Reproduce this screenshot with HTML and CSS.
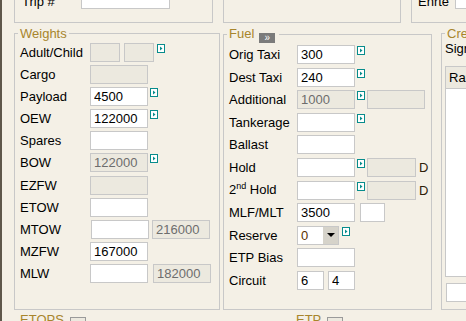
FILE: index.html
```html
<!DOCTYPE html>
<html>
<head>
<meta charset="utf-8">
<link rel="stylesheet" href="styles.css">
</head>
<body>
<div class="page">
  <div class="toprow">
    <div class="topbox tb1"><span class="tlbl">Trip #</span><input class="inp trip" type="text"></div>
    <div class="topbox tb2"></div>
    <div class="topbox tb3"><span class="tlbl2">Enrte</span><input class="inp enrte" type="text"></div>
  </div>

  <div class="mainrow">
    <fieldset class="fs weights">
      <legend>Weights</legend>
      <div class="rows">
        <div class="row"><span class="lbl">Adult/Child</span><input class="inp dis w30" disabled><input class="inp dis w30 ml4" disabled><svg class="ico ml3" width="8" height="9" viewBox="0 0 8 9"><rect x="0.5" y="0.5" width="7" height="8" fill="#fff" stroke="#078c8c"/><path d="M3 2.5L5.5 4.5L3 6.5Z" fill="#078c8c"/></svg></div>
        <div class="row"><span class="lbl">Cargo</span><input class="inp dis w58" disabled></div>
        <div class="row"><span class="lbl">Payload</span><input class="inp w58" value="4500"><svg class="ico" width="8" height="9" viewBox="0 0 8 9"><rect x="0.5" y="0.5" width="7" height="8" fill="#fff" stroke="#078c8c"/><path d="M3 2.5L5.5 4.5L3 6.5Z" fill="#078c8c"/></svg></div>
        <div class="row"><span class="lbl">OEW</span><input class="inp w58" value="122000"><svg class="ico" width="8" height="9" viewBox="0 0 8 9"><rect x="0.5" y="0.5" width="7" height="8" fill="#fff" stroke="#078c8c"/><path d="M3 2.5L5.5 4.5L3 6.5Z" fill="#078c8c"/></svg></div>
        <div class="row"><span class="lbl">Spares</span><input class="inp w58"></div>
        <div class="row"><span class="lbl">BOW</span><input class="inp dis w58" value="122000" disabled><svg class="ico" width="8" height="9" viewBox="0 0 8 9"><rect x="0.5" y="0.5" width="7" height="8" fill="#fff" stroke="#078c8c"/><path d="M3 2.5L5.5 4.5L3 6.5Z" fill="#078c8c"/></svg></div>
        <div class="row"><span class="lbl">EZFW</span><input class="inp dis w58" disabled></div>
        <div class="row"><span class="lbl">ETOW</span><input class="inp w58"></div>
        <div class="row"><span class="lbl">MTOW</span><input class="inp w58 ml1"><input class="inp dis w58 ml3" value="216000" disabled></div>
        <div class="row"><span class="lbl">MZFW</span><input class="inp w58" value="167000"></div>
        <div class="row"><span class="lbl">MLW</span><input class="inp w58"><input class="inp dis w58 ml5" value="182000" disabled></div>
      </div>
    </fieldset>

    <fieldset class="fs fuel">
      <legend>Fuel<span class="more">&raquo;</span></legend>
      <div class="rows">
        <div class="row"><span class="lbl">Orig Taxi</span><input class="inp w58" value="300"><svg class="ico" width="8" height="9" viewBox="0 0 8 9"><rect x="0.5" y="0.5" width="7" height="8" fill="#fff" stroke="#078c8c"/><path d="M3 2.5L5.5 4.5L3 6.5Z" fill="#078c8c"/></svg></div>
        <div class="row"><span class="lbl">Dest Taxi</span><input class="inp w58" value="240"><svg class="ico" width="8" height="9" viewBox="0 0 8 9"><rect x="0.5" y="0.5" width="7" height="8" fill="#fff" stroke="#078c8c"/><path d="M3 2.5L5.5 4.5L3 6.5Z" fill="#078c8c"/></svg></div>
        <div class="row"><span class="lbl">Additional</span><input class="inp dis w58" value="1000" disabled><svg class="ico" width="8" height="9" viewBox="0 0 8 9"><rect x="0.5" y="0.5" width="7" height="8" fill="#fff" stroke="#078c8c"/><path d="M3 2.5L5.5 4.5L3 6.5Z" fill="#078c8c"/></svg><input class="inp dis w58 ml2" disabled></div>
        <div class="row"><span class="lbl">Tankerage</span><input class="inp w58"><svg class="ico" width="8" height="9" viewBox="0 0 8 9"><rect x="0.5" y="0.5" width="7" height="8" fill="#fff" stroke="#078c8c"/><path d="M3 2.5L5.5 4.5L3 6.5Z" fill="#078c8c"/></svg></div>
        <div class="row"><span class="lbl">Ballast</span><input class="inp w58"></div>
        <div class="row"><span class="lbl">Hold</span><input class="inp w58"><svg class="ico" width="8" height="9" viewBox="0 0 8 9"><rect x="0.5" y="0.5" width="7" height="8" fill="#fff" stroke="#078c8c"/><path d="M3 2.5L5.5 4.5L3 6.5Z" fill="#078c8c"/></svg><input class="inp dis w49 ml2" disabled><span class="dch">D</span></div>
        <div class="row r2h"><span class="lbl">2<sup>nd</sup> Hold</span><input class="inp w58"><svg class="ico" width="8" height="9" viewBox="0 0 8 9"><rect x="0.5" y="0.5" width="7" height="8" fill="#fff" stroke="#078c8c"/><path d="M3 2.5L5.5 4.5L3 6.5Z" fill="#078c8c"/></svg><input class="inp dis w49 ml2" disabled><span class="dch">D</span></div>
        <div class="row"><span class="lbl">MLF/MLT</span><input class="inp w58" value="3500"><input class="inp w25 ml5"></div>
        <div class="row"><span class="lbl">Reserve</span><div class="sel"><span class="selval">0</span><span class="selarr"><span class="tri"></span></span></div><svg class="ico ml3" width="8" height="9" viewBox="0 0 8 9"><rect x="0.5" y="0.5" width="7" height="8" fill="#fff" stroke="#078c8c"/><path d="M3 2.5L5.5 4.5L3 6.5Z" fill="#078c8c"/></svg></div>
        <div class="row"><span class="lbl">ETP Bias</span><input class="inp w58"></div>
        <div class="row"><span class="lbl">Circuit</span><input class="inp w27" value="6"><input class="inp w27 ml4" value="4"></div>
      </div>
    </fieldset>

    <fieldset class="fs crew">
      <legend>Crew</legend>
      <div class="sig">Sign On</div>
      <div class="ctable">
        <div class="chead">Rank</div>
      </div>
      <input class="inp cinp">
    </fieldset>
  </div>

  <div class="bottomrow">
    <fieldset class="fs etops"><legend>ETOPS<span class="mini">&raquo;</span></legend></fieldset>
    <fieldset class="fs etp"><legend>ETP<span class="mini">&raquo;</span></legend></fieldset>
  </div>
</div>
</body>
</html>
```

FILE: styles.css
```css
html, body {
  margin: 0;
  overflow: hidden;
}
body {
  width: 466px;
  height: 321px;
  background: #f4f0e6;
  font: 13px/15px "Liberation Sans", Arial, sans-serif;
  color: #000;
}
.page {
  width: 720px;
  height: 321px;
  border-left: 2px solid #5f574b;
  box-sizing: border-box;
}

/* top row */
.toprow {
  display: flex;
  height: 23px;
}
.topbox {
  border: 1px solid #c8c8c8;
  border-top: none;
  box-sizing: border-box;
  display: flex;
  align-items: flex-end;
  padding-bottom: 13px;
  flex: none;
}
.tb1 { margin-left: 12px; width: 199px; padding-left: 7px; }
.tb2 { margin-left: 10px; width: 178px; }
.tb3 { margin-left: 10px; width: 200px; padding-left: 6px; }
.tlbl { width: 59px; flex: none; }
.tlbl2 { width: 37px; flex: none; }
.trip { width: 89px; }
.enrte { width: 80px; }

/* inputs */
.inp {
  font: 13px "Liberation Sans", Arial, sans-serif;
  box-sizing: border-box;
  height: 19px;
  border: 1px solid #c8c8c8;
  padding: 0 3px;
  margin: 0;
  background: #fff;
  color: #000;
  outline: none;
  flex: none;
}
.inp.dis {
  background: #ece9df;
  color: #6d6d6d;
  -webkit-text-fill-color: #6d6d6d;
  opacity: 1;
}
.w25 { width: 25px; }
.w27 { width: 27px; }
.w30 { width: 30px; }
.w49 { width: 49px; }
.w58 { width: 58px; }
.ml1 { margin-left: 1px; }
.ml2 { margin-left: 2px; }
.ml3 { margin-left: 3px; }
.ml4 { margin-left: 4px; }
.ml5 { margin-left: 5px; }

/* fieldsets */
.mainrow {
  display: flex;
  margin-top: 3px;
}
.fs {
  margin: 0;
  padding: 0 0 0 5px;
  border: 1px solid #c8c8c8;
  box-sizing: border-box;
  min-width: 0;
  flex: none;
}
.fs legend {
  padding: 0 2px;
  margin-left: -2px;
  line-height: 15px;
  font-size: 13px;
  color: #a8852c;
}
.weights { margin-left: 12px; width: 206px; height: 284px; }
.fuel { margin-left: 3px; width: 209px; height: 284px; }
.crew { margin-left: 9px; width: 200px; height: 284px; padding-left: 3px; }
.crew legend { margin-left: 0; }

.rows { padding-top: 2px; }
.row {
  display: flex;
  align-items: center;
  height: 19px;
}
.weights .row { margin-bottom: 3.1px; }
.fuel .row { margin-bottom: 3.6px; }
.fuel .r2h { margin-top: 1.4px; }
.lbl { width: 70px; flex: none; white-space: nowrap; }
.fuel .lbl { width: 68px; }
.lbl sup { font-size: 9px; line-height: 9px; }

.ico {
  flex: none;
  align-self: flex-start;
  margin-top: 1px;
  margin-left: 2px;
}
.ico.ml3 { margin-left: 3px; }

.dch { margin-left: 3px; color: #2e2008; }

.more {
  display: inline-block;
  width: 16px;
  height: 10px;
  margin-left: 5px;
  margin-right: 2px;
  background: #7b7b7b;
  color: #fff;
  font-size: 10px;
  line-height: 9px;
  text-align: center;
  vertical-align: -3px;
}

/* select */
.sel {
  display: flex;
  width: 42px;
  height: 19px;
  box-sizing: border-box;
  border: 1px solid #c8c8c8;
  background: #fff;
  flex: none;
}
.selval {
  flex: 1;
  padding-left: 3px;
  line-height: 17px;
  color: #5a3200;
}
.selarr {
  width: 15px;
  background: #d6d3ca;
  display: flex;
  align-items: center;
  justify-content: center;
}
.tri {
  width: 0;
  height: 0;
  border-left: 4px solid transparent;
  border-right: 4px solid transparent;
  border-top: 4px solid #000;
}

/* crew */
.sig { line-height: 15px; }
.ctable {
  margin-top: 10px;
  height: 211px;
  border: 1px solid #c8c8c8;
  border-right: none;
  background: #fff;
  box-sizing: border-box;
}
.chead {
  height: 21px;
  line-height: 21px;
  background: #ece9df;
  border-bottom: 1px solid #c8c8c8;
  padding-left: 3px;
}
.cinp {
  margin-top: 6px;
  margin-left: 1px;
  width: 100px;
}

/* bottom */
.bottomrow {
  display: flex;
  margin-top: 2px;
}
.etops { margin-left: 12px; width: 272px; height: 60px; }
.etp { margin-left: 4px; width: 200px; height: 60px; }
.mini {
  display: inline-block;
  width: 14px;
  height: 14px;
  margin-left: 6px;
  border: 1px solid #9a9a9a;
  background: #ece9df;
  color: #333;
  font-size: 10px;
  line-height: 14px;
  text-align: center;
  vertical-align: -4px;
}
```
